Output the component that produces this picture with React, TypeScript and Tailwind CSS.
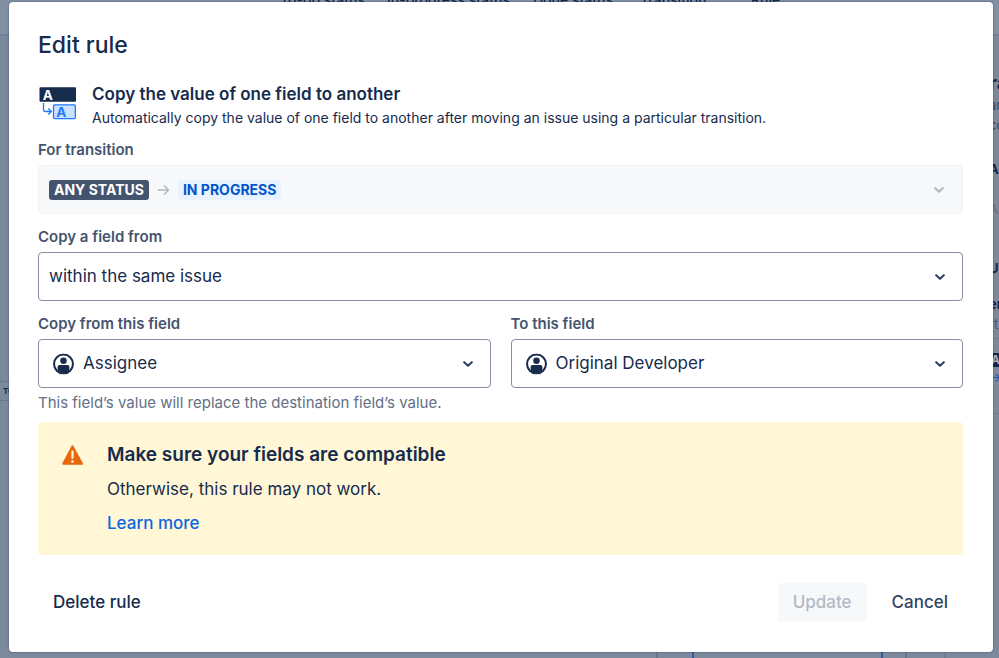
import type { ReactNode } from "react";

function Chevron({ className }: { className: string }) {
  return (
    <svg viewBox="0 0 12 8" className={`pointer-events-none h-2 w-3 ${className}`} fill="none" stroke="currentColor" strokeWidth="2.2" strokeLinecap="round" strokeLinejoin="round" aria-hidden="true">
      <path d="M2.200 2.200L6 5.800l3.800-3.600" />
    </svg>
  );
}

function PersonIcon() {
  return (
    <svg viewBox="0 0 20 20" className="pointer-events-none absolute top-1/2 left-[15px] size-[21px] -translate-y-1/2 text-[#172b4d]" aria-hidden="true">
      <circle cx="10" cy="10" r="9" fill="none" stroke="currentColor" strokeWidth="1.9" />
      <circle cx="10" cy="6.9" r="3.100" fill="currentColor" />
      <path d="M4.400 13c0-1.300.8-2 2-2h7.200c1.200 0 2 .7 2 2v3.300A8.500 8.500 0 0 1 10 18.600a8.500 8.500 0 0 1-5.600-2.300z" fill="currentColor" />
    </svg>
  );
}

function CopyFieldIcon() {
  return (
    <svg viewBox="0 0 38 34" className="h-[34px] w-[38px] shrink-0" aria-hidden="true">
      <rect x="1.500" y="1.300" width="36.500" height="14.500" rx="1" fill="#172b4d" />
      <text x="4.800" y="13.500" fontFamily="Inter, sans-serif" fontWeight="700" fontSize="13.500" fill="#fff">A</text>
      <path d="M5.500 17V23.500q0 2 2 2H13M10.300 22.500l3 3-3 3" fill="none" stroke="#1d7afc" strokeWidth="1.300" />
      <rect x="15.500" y="18.800" width="21.800" height="13.800" rx="1" fill="#cce0ff" stroke="#1d7afc" strokeWidth="1.300" />
      <text x="18.300" y="30.500" fontFamily="Inter, sans-serif" fontWeight="700" fontSize="13.500" fill="#1d7afc">A</text>
    </svg>
  );
}

function WarningIcon() {
  return (
    <svg viewBox="0 0 22 20" className="mt-1 h-5 w-[22px] shrink-0" aria-hidden="true">
      <path d="M10.500 1.200L20 18.800H1.200z" fill="#e56910" stroke="#e56910" strokeWidth="2" strokeLinejoin="round" />
      <path d="M10.500 6.500v6.200" stroke="#fff7d6" strokeWidth="2.200" strokeLinecap="round" />
      <circle cx="10.500" cy="16.500" r="1.300" fill="#fff7d6" />
    </svg>
  );
}

function Field({ id, label, value, icon }: { id: string; label: string; value: string; icon?: ReactNode }) {
  return (
    <div className="mt-[13px] min-w-0 flex-1">
      <label htmlFor={id} className="mb-[5px] block text-[15px] leading-5 font-semibold text-[#44546f]">{label}</label>
      <div className="relative">
        {icon}
        <select id={id} className={`block h-[49px] w-full appearance-none rounded-[4px] border border-[#8590a2] bg-white pr-10 text-[17px] text-[#172b4d] ${icon ? "pl-11" : "pl-[10px]"}`}>
          <option>{value}</option>
        </select>
        <Chevron className="absolute top-1/2 right-[17px] -translate-y-1/2 text-[#344563]" />
      </div>
    </div>
  );
}

function Backdrop() {
  return (
    <div aria-hidden="true" className="absolute inset-0 flex flex-col overflow-hidden bg-[#7c899c] text-[#13264d]">
      <div className="h-9 border-b-2 border-[#72809a] bg-[#8290a4]">
        <div className="-mt-[10px] flex pl-[280px] text-[14px] leading-5 font-medium whitespace-nowrap">
          <span className="w-[107px]">To-do status</span>
          <span className="w-[146px]">In-progress status</span>
          <span className="w-[107px]">Done status</span>
          <span className="w-[111px]">Transition</span>
          <span>Rule</span>
        </div>
      </div>
      <div className="flex flex-1 justify-between">
        <div className="mt-[345px] h-5 w-9 border-y border-[#6b7990] pl-[3px] text-[8px] leading-[18px] font-bold">TO DO</div>
        <div className="flex w-[10px] flex-col overflow-hidden text-[13px] leading-5 whitespace-nowrap">
          <span className="mt-[37px] text-[20px] font-bold">ra</span>
          <span className="mt-[2px] text-[#344563]">an</span>
          <span className="text-[#344563]">co</span>
          <span className="mt-6 font-bold">AP</span>
          <span className="mt-5 text-[#5e6c84]">AP</span>
          <span className="mt-[39px] font-bold">UP</span>
          <span className="mt-4 font-bold">er</span>
          <span className="text-[#44546f]">rt</span>
          <span className="mt-1 border-t border-[#6b7990]" />
          <span className="mt-[14px] h-[14px] bg-[#13264d] pl-[2px] text-[12px] leading-[14px] font-bold text-[#a6b0bf]">A</span>
          <span className="text-[#1d56b0]">→</span>
          <span className="mt-[26px] border-t border-[#6b7990]" />
        </div>
      </div>
      <div className="flex h-2 justify-end">
        <div className="w-9 border-l-2 border-[#68768d]" />
        <div className="w-[191px] border-x-2 border-[#2f5aa6]" />
        <div className="w-[22px]" />
        <div className="w-[39px] border-l-2 border-[#68768d]" />
        <div className="w-[55px] border-l-2 border-[#6e7c92]" />
      </div>
    </div>
  );
}

export default function App() {
  return (
    <div className="relative min-h-screen pt-[2px] pr-[6px] pb-[7px] pl-[9px] font-[Inter,'Liberation_Sans',sans-serif] text-[#172b4d]">
      <Backdrop />
      <section role="dialog" aria-modal="true" aria-labelledby="dialog-title" className="relative rounded-[4px] bg-white pt-7 pr-[30px] pb-[30px] pl-[29px] shadow-[0_0_2px_rgba(9,30,66,0.5)]">
        <h1 id="dialog-title" className="text-[23px] leading-[30px] font-medium">Edit rule</h1>

        <div className="mt-[22px] flex gap-4">
          <div className="pt-1"><CopyFieldIcon /></div>
          <div>
            <h2 className="text-[17px] leading-6 font-semibold">Copy the value of one field to another</h2>
            <p className="text-[14px] leading-6">Automatically copy the value of one field to another after moving an issue using a particular transition.</p>
          </div>
        </div>

        <div className="mt-[10px]">
          <label htmlFor="transition" className="mb-[5px] block text-[15px] leading-5 font-semibold text-[#44546f]">For transition</label>
          <button id="transition" type="button" disabled aria-haspopup="listbox" className="flex h-[49px] w-full items-center rounded-[4px] border border-[#f1f2f4] bg-[#f7f8f9] pr-[17px] pl-[10px] text-[14px] leading-5 font-bold">
            <span className="rounded-[3px] bg-[#44546f] px-[5px] text-white">ANY STATUS</span>
            <svg viewBox="0 0 14 12" className="mx-2 h-3 w-[13px] text-[#b3b9c4]" fill="none" stroke="currentColor" strokeWidth="1.600" strokeLinecap="round" strokeLinejoin="round" aria-hidden="true">
              <path d="M1.500 6h11M8 1.500L12.500 6 8 10.500" />
            </svg>
            <span className="rounded-[3px] bg-[#e9f2ff] px-[5px] text-[#0055cc]">IN PROGRESS</span>
            <Chevron className="ml-auto text-[#b3b9c4]" />
          </button>
        </div>

        <Field id="source" label="Copy a field from" value="within the same issue" />

        <div className="flex gap-5">
          <Field id="from-field" label="Copy from this field" value="Assignee" icon={<PersonIcon />} />
          <Field id="to-field" label="To this field" value="Original Developer" icon={<PersonIcon />} />
        </div>
        <p className="mt-[5px] text-[15px] leading-5 text-[#626f86]">This field’s value will replace the destination field’s value.</p>

        <div className="mt-[9px] flex gap-[23px] rounded-[4px] bg-[#fff7d6] px-6 pt-[19px] pb-5">
          <WarningIcon />
          <div>
            <h2 className="text-[19px] leading-7 font-semibold">Make sure your fields are compatible</h2>
            <p className="mt-2 text-[17px] leading-6">Otherwise, this rule may not work.</p>
            <a href="#learn-more" className="mt-[10px] block text-[17px] leading-6 font-medium text-[#0c66e4]">Learn more</a>
          </div>
        </div>

        <div className="mt-7 flex h-[39px] items-stretch text-[17px] font-medium">
          <button type="button" className="rounded-[4px] px-[15px]">Delete rule</button>
          <button type="button" disabled className="ml-auto rounded-[4px] bg-[#f7f8f9] px-[15px] text-[#b3b9c4]">Update</button>
          <button type="button" className="ml-[10px] rounded-[4px] px-[15px] text-[#344563]">Cancel</button>
        </div>
      </section>
    </div>
  );
}
